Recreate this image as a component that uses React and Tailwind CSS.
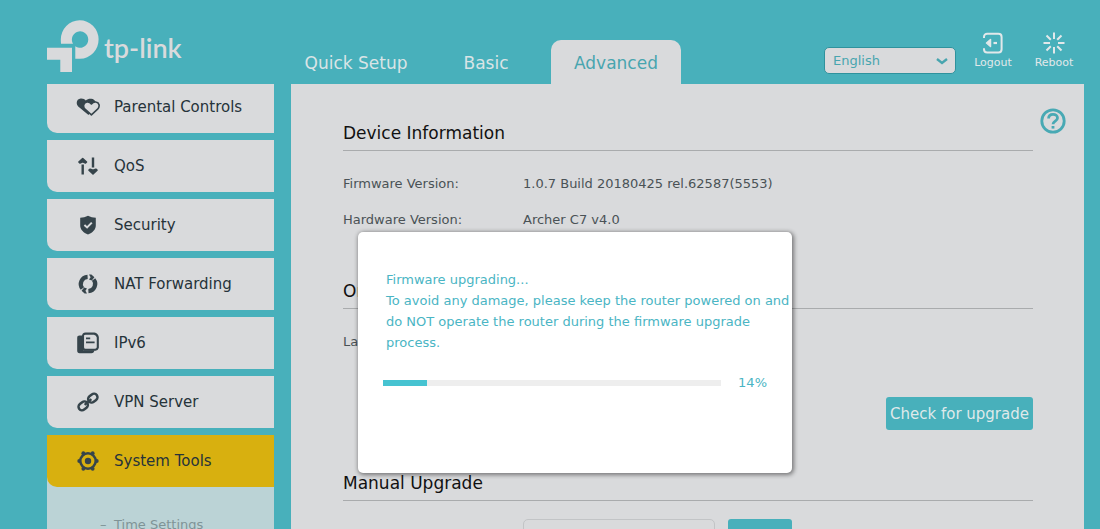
import React, { useState } from "react";

const ParentalIcon = () => (
  <svg className="w-6 h-6" viewBox="0 0 24 24">
    <path d="M12.500 20 2.200 11.500C-.6 8.300.8 3.700 4.800 3.500c2.400-.1 4 .8 5 2 1.400-1.300 3.300-2 5.400-1.800 2.400.2 4 1.600 4.600 3.800z" fill="#36444b" />
    <path d="M15.400 19.800 9 14.200C6.500 11.500 7.500 7.400 11 7c1.900-.2 3.400.6 4.400 2 1.100-1.500 2.700-2.300 4.500-2 3.500.5 4.300 4.500 1.700 7.200z" fill="#d9dadc" stroke="#36444b" strokeWidth="1.600" strokeLinejoin="round" />
  </svg>
);

const QosIcon = () => (
  <svg className="w-6 h-6" viewBox="0 0 24 24" fill="#36444b" stroke="#36444b" strokeLinejoin="round">
    <path d="M6.700 10.500V20.500M17 3.500v10" strokeWidth="2.400" fill="none" />
    <path d="M6.700 4.500 10.500 8 9.500 9 6.700 7.800 3.900 9 2.900 8zM17 19.800l4-3.600-1.200-1L17 16.200l-2.800-1-1.200 1z" strokeWidth="1.600" />
  </svg>
);

const ShieldIcon = () => (
  <svg className="w-6 h-6" viewBox="0 0 24 24">
    <path d="M12 2.800c2.400 1.200 5 1.900 7.800 2v7.800c0 4-3.200 7.200-7.800 9-4.600-1.800-7.800-5-7.800-9V4.800C7 4.700 9.600 4 12 2.800z" fill="#36444b" />
    <path d="m8.400 12 2.700 2.400 4.700-4.800" fill="none" stroke="#d9dadc" strokeWidth="2" />
  </svg>
);

const NatIcon = () => (
  <svg className="w-6 h-6" viewBox="0 0 24 24">
    <g fill="none" stroke="#36444b" strokeWidth="4.200">
      <path d="M11.600 4.800A7.200 7.200 0 0 0 6.400 16.500" />
      <path d="M12.400 19.200A7.200 7.200 0 0 0 17.600 7.500" />
    </g>
    <path d="M13 2.600h2.400l3 2.600-2.600 3.200-2.800-.8 1.600-2.400zM11 21.400H8.600l-3-2.600 2.600-3.200 2.800.8-1.600 2.400z" fill="#36444b" />
  </svg>
);

const Ipv6Icon = () => (
  <svg className="w-6 h-6" viewBox="0 0 24 24">
    <path d="M3.600 4.600H7v14.600h11.400c-.2 1.900-1.200 3-3 3H3.600c-1.600 0-2.400-.8-2.400-2.400V7c0-1.600.8-2.400 2.400-2.400z" fill="#36444b" />
    <path d="M9.600 2.600h8.600c2 .4 3.200 1.600 3.600 3.600v10.400c-.4 1.200-1.200 2-2.400 2.200H9.600c-1.800 0-2.600-.8-2.600-2.600v-11c0-1.800.8-2.600 2.600-2.600z" fill="#d9dadc" stroke="#36444b" strokeWidth="2.100" />
    <path d="M10 7.400h4.200M10 11.400h8.600" stroke="#36444b" strokeWidth="1.900" />
  </svg>
);

const VpnIcon = () => (
  <svg className="w-6 h-6" viewBox="0 0 24 24" fill="none" stroke="#36444b" strokeWidth="2.500">
    <rect x="2.200" y="12.400" width="10" height="7" rx="3.500" transform="rotate(-38 7.200 15.900)" />
    <rect x="11.800" y="4.600" width="10" height="7" rx="3.500" transform="rotate(-38 16.800 8.100)" />
    <path d="m8.600 14.800 6.800-5.600" strokeWidth="2.200" />
  </svg>
);

const ToolsIcon = () => (
  <svg className="w-6 h-6" viewBox="0 0 24 24">
    <circle cx="12" cy="12" r="7.700" fill="none" stroke="#36444b" strokeWidth="2.500" />
    <g fill="#36444b">
      <circle cx="7.300" cy="4.200" r="1.900" />
      <circle cx="16.700" cy="4.200" r="1.900" />
      <circle cx="7.300" cy="19.800" r="1.900" />
      <circle cx="16.700" cy="19.800" r="1.900" />
      <circle cx="3.200" cy="12" r="1.900" />
      <circle cx="20.800" cy="12" r="1.900" />
      <circle cx="12" cy="12" r="3.200" />
    </g>
  </svg>
);

const menuItems = [
  { name: "Parental Controls", icon: <ParentalIcon /> },
  { name: "QoS", icon: <QosIcon /> },
  { name: "Security", icon: <ShieldIcon /> },
  { name: "NAT Forwarding", icon: <NatIcon /> },
  { name: "IPv6", icon: <Ipv6Icon /> },
  { name: "VPN Server", icon: <VpnIcon /> },
];

const Logo = () => (
  <a href="#" className="flex items-center gap-[5px] pt-5 text-[#d9dadc]">
    <svg className="w-[52px] h-[52px]" viewBox="0 0 52 52" fill="currentColor">
      <path d="M14 23.700c-.1-1.400-.2-2.700-.2-4.200A18.900 19.200 0 1 1 33 38.700h-4.700V26.200A8.200 8.200 0 1 0 26 23.700z" />
      <path d="M0 27.700h25V52H13.300V39.700H0z" />
    </svg>
    <span className="pt-1 font-['Lato',sans-serif] text-[27px] leading-8 font-semibold">tp-link</span>
  </a>
);

const Header = ({ tab, setTab }) => {
  return (
    <header className="h-21 shrink-0 flex pl-[47px] pr-7">
      <div className="w-[244px]">
        <Logo />
      </div>
      <nav className="flex items-end">
        {["Quick Setup", "Basic", "Advanced"].map((name) => (
          <button
            key={name}
            onClick={() => setTab(name)}
            className={`w-[130px] h-11 pt-1 rounded-t-[10px] text-[17px] ${
              tab === name ? "bg-[#d9dadc] text-[#48a5af]" : "text-[#d9e4e6]"
            }`}
          >
            {name}
          </button>
        ))}
      </nav>

      {/* Right: language + actions */}
      <div className="ml-auto flex items-start pt-8 text-[11px] text-[#e2e8ea]">
        <div className="relative mt-[15px] mr-[19px]">
          <select
            aria-label="Language"
            className="appearance-none w-[132px] h-[27px] pl-2 rounded-[5px] border border-[#2f929d] bg-[#d9dadc] text-[13px] text-[#48a5af]"
          >
            <option>English</option>
          </select>
          <svg className="absolute right-2 top-2 w-3 h-3 pointer-events-none" viewBox="0 0 12 12" fill="none" stroke="#48a5af" strokeWidth="2.400">
            <path d="m1 4 5 4 5-4" />
          </svg>
        </div>
        <button className="w-9 mr-[25px] flex flex-col items-center">
          <svg className="w-[22px] h-[22px]" viewBox="0 0 22 22" fill="none" stroke="currentColor" strokeWidth="2">
            <path d="M2 6V5c0-2 1.200-3.200 3.200-3.200h11.200c2 0 3.200 1.200 3.200 3.200v12.200c0 2-1.200 3.200-3.200 3.200H5.200C3.200 20.400 2 19.200 2 17.200v-1" />
            <path d="M11.500 11H15" strokeWidth="2.200" />
            <path d="M8.500 7.500 4.500 11l4 3.500z" fill="currentColor" strokeWidth="1.500" strokeLinejoin="round" />
          </svg>
          <span className="leading-[18px]">Logout</span>
        </button>
        <button className="w-9 flex flex-col items-center">
          <svg className="w-[22px] h-[22px]" viewBox="0 0 22 22" fill="none" stroke="currentColor" strokeWidth="2">
            <path d="M11 .5v6.500M11 15v6.500M.5 11H7M15 11h6.500M3.500 3.500l4.300 4.300M14.200 14.200l4.300 4.300M18.500 3.500l-4.300 4.300M7.800 14.200l-4.300 4.300" />
          </svg>
          <span className="leading-[18px]">Reboot</span>
        </button>
      </div>
    </header>
  );
};

const Sidebar = () => (
  <aside className="w-[227px] shrink-0 overflow-hidden text-[15px] text-[#26333a]">
    <ul className="-mt-[3px] flex flex-col gap-[7px]">
      {menuItems.map((item) => (
        <li key={item.name}>
          <button className="w-full h-13 pl-[29px] flex items-center gap-[14px] rounded-bl-[10px] bg-[#d9dadc]">
            {item.icon}
            {item.name}
          </button>
        </li>
      ))}
      <li className="bg-[#bbd3d6]">
        <button className="w-full h-13 pl-[29px] flex items-center gap-[14px] rounded-bl-[10px] bg-[#d8b00f]">
          <ToolsIcon />
          System Tools
        </button>
        <a href="#" className="flex pl-[53px] py-7 text-[13px] leading-5 text-[#7f9396]">
          <span className="w-[14px]">–</span>Time Settings
        </a>
      </li>
    </ul>
  </aside>
);

const SectionTitle = ({ children }) => (
  <h2 className="pb-[5px] mb-[15px] border-b border-[#a9abad] text-[17px] leading-6 text-[#111]">{children}</h2>
);

const Row = ({ label, children }) => (
  <div className="h-9 flex items-center">
    <span className="w-[180px] shrink-0">{label}</span>
    {children}
  </div>
);

const UpgradeDialog = ({ percent }) => (
  <div
    role="dialog"
    aria-label="Firmware upgrade"
    className="absolute left-[67px] top-37 w-[434px] h-[241px] pt-[37px] pl-[25px] rounded-[5px] bg-white text-[13px] leading-[21px] text-[#4ab5c4] shadow-[1px_1px_4px_1px_rgba(0,0,0,0.45)]"
  >
    <p className="pl-[3px]">
      Firmware upgrading...
      <br />
      To avoid any damage, please keep the router powered on and
      <br />
      do NOT operate the router during the firmware upgrade
      <br />
      process.
    </p>
    <div className="mt-[19px] mr-[25px] flex items-center">
      <div role="progressbar" aria-valuenow={percent} className="grow h-1.5 mr-[17px] bg-[#eeeeee]">
        <div className="w-[13%] h-full bg-[#46c3d1]" />
      </div>
      <span>{percent}%</span>
    </div>
  </div>
);

const App = () => {
  const [tab, setTab] = useState("Advanced");

  return (
    <div className="h-screen flex flex-col overflow-hidden bg-[#48b0bb] font-['Verdana','DejaVu_Sans',sans-serif]">
      <Header tab={tab} setTab={setTab} />
      <div className="grow min-h-0 flex pl-[47px] pr-4 gap-[17px]">
        <Sidebar />
        <main className="relative grow overflow-hidden flex items-start pl-13 pr-[18px] bg-[#d9dadc] text-[13px] text-[#4a5256]">
          <div className="grow pt-[37px]">
            <SectionTitle>Device Information</SectionTitle>
            <Row label="Firmware Version:">1.0.7 Build 20180425 rel.62587(5553)</Row>
            <Row label="Hardware Version:">Archer C7 v4.0</Row>

            <div className="mt-[41px]">
              <SectionTitle>Online Upgrade</SectionTitle>
              <Row label="Latest Firmware Version:" />
              <button className="block ml-auto mt-[37px] h-[33px] w-[147px] pt-0.5 rounded-[3px] bg-[#48b0bb] text-[15px] text-[#dfe9ea]">
                Check for upgrade
              </button>
            </div>

            <div className="mt-[41px]">
              <SectionTitle>Manual Upgrade</SectionTitle>
              <div className="h-9 flex items-center">
                <label htmlFor="firmware" className="w-[180px] shrink-0 pt-0.5">
                  New Firmware File:
                </label>
                <input id="firmware" type="text" className="w-48 h-[30px] rounded-[5px] border border-[#c2c4c6]" />
                <button className="w-16 h-[30px] ml-[13px] rounded-[3px] bg-[#48b0bb] text-[#dfe9ea]">Browse</button>
              </div>
            </div>
          </div>

          {/* Help */}
          <button aria-label="Help" className="mt-6 ml-[7px]">
            <svg className="w-[26px] h-[26px]" viewBox="0 0 26 26" fill="none" stroke="#48a9b4" strokeWidth="2.800">
              <circle cx="13" cy="13" r="11.200" />
              <path d="M8.600 10.600c0-2.600 1.800-4.200 4.400-4.200s4.500 1.500 4.500 3.700c0 3-4.500 3.200-4.500 6.200" />
              <path d="M13 18v2.600" />
            </svg>
          </button>

          <UpgradeDialog percent={14} />
        </main>
      </div>
    </div>
  );
};

export default App;
